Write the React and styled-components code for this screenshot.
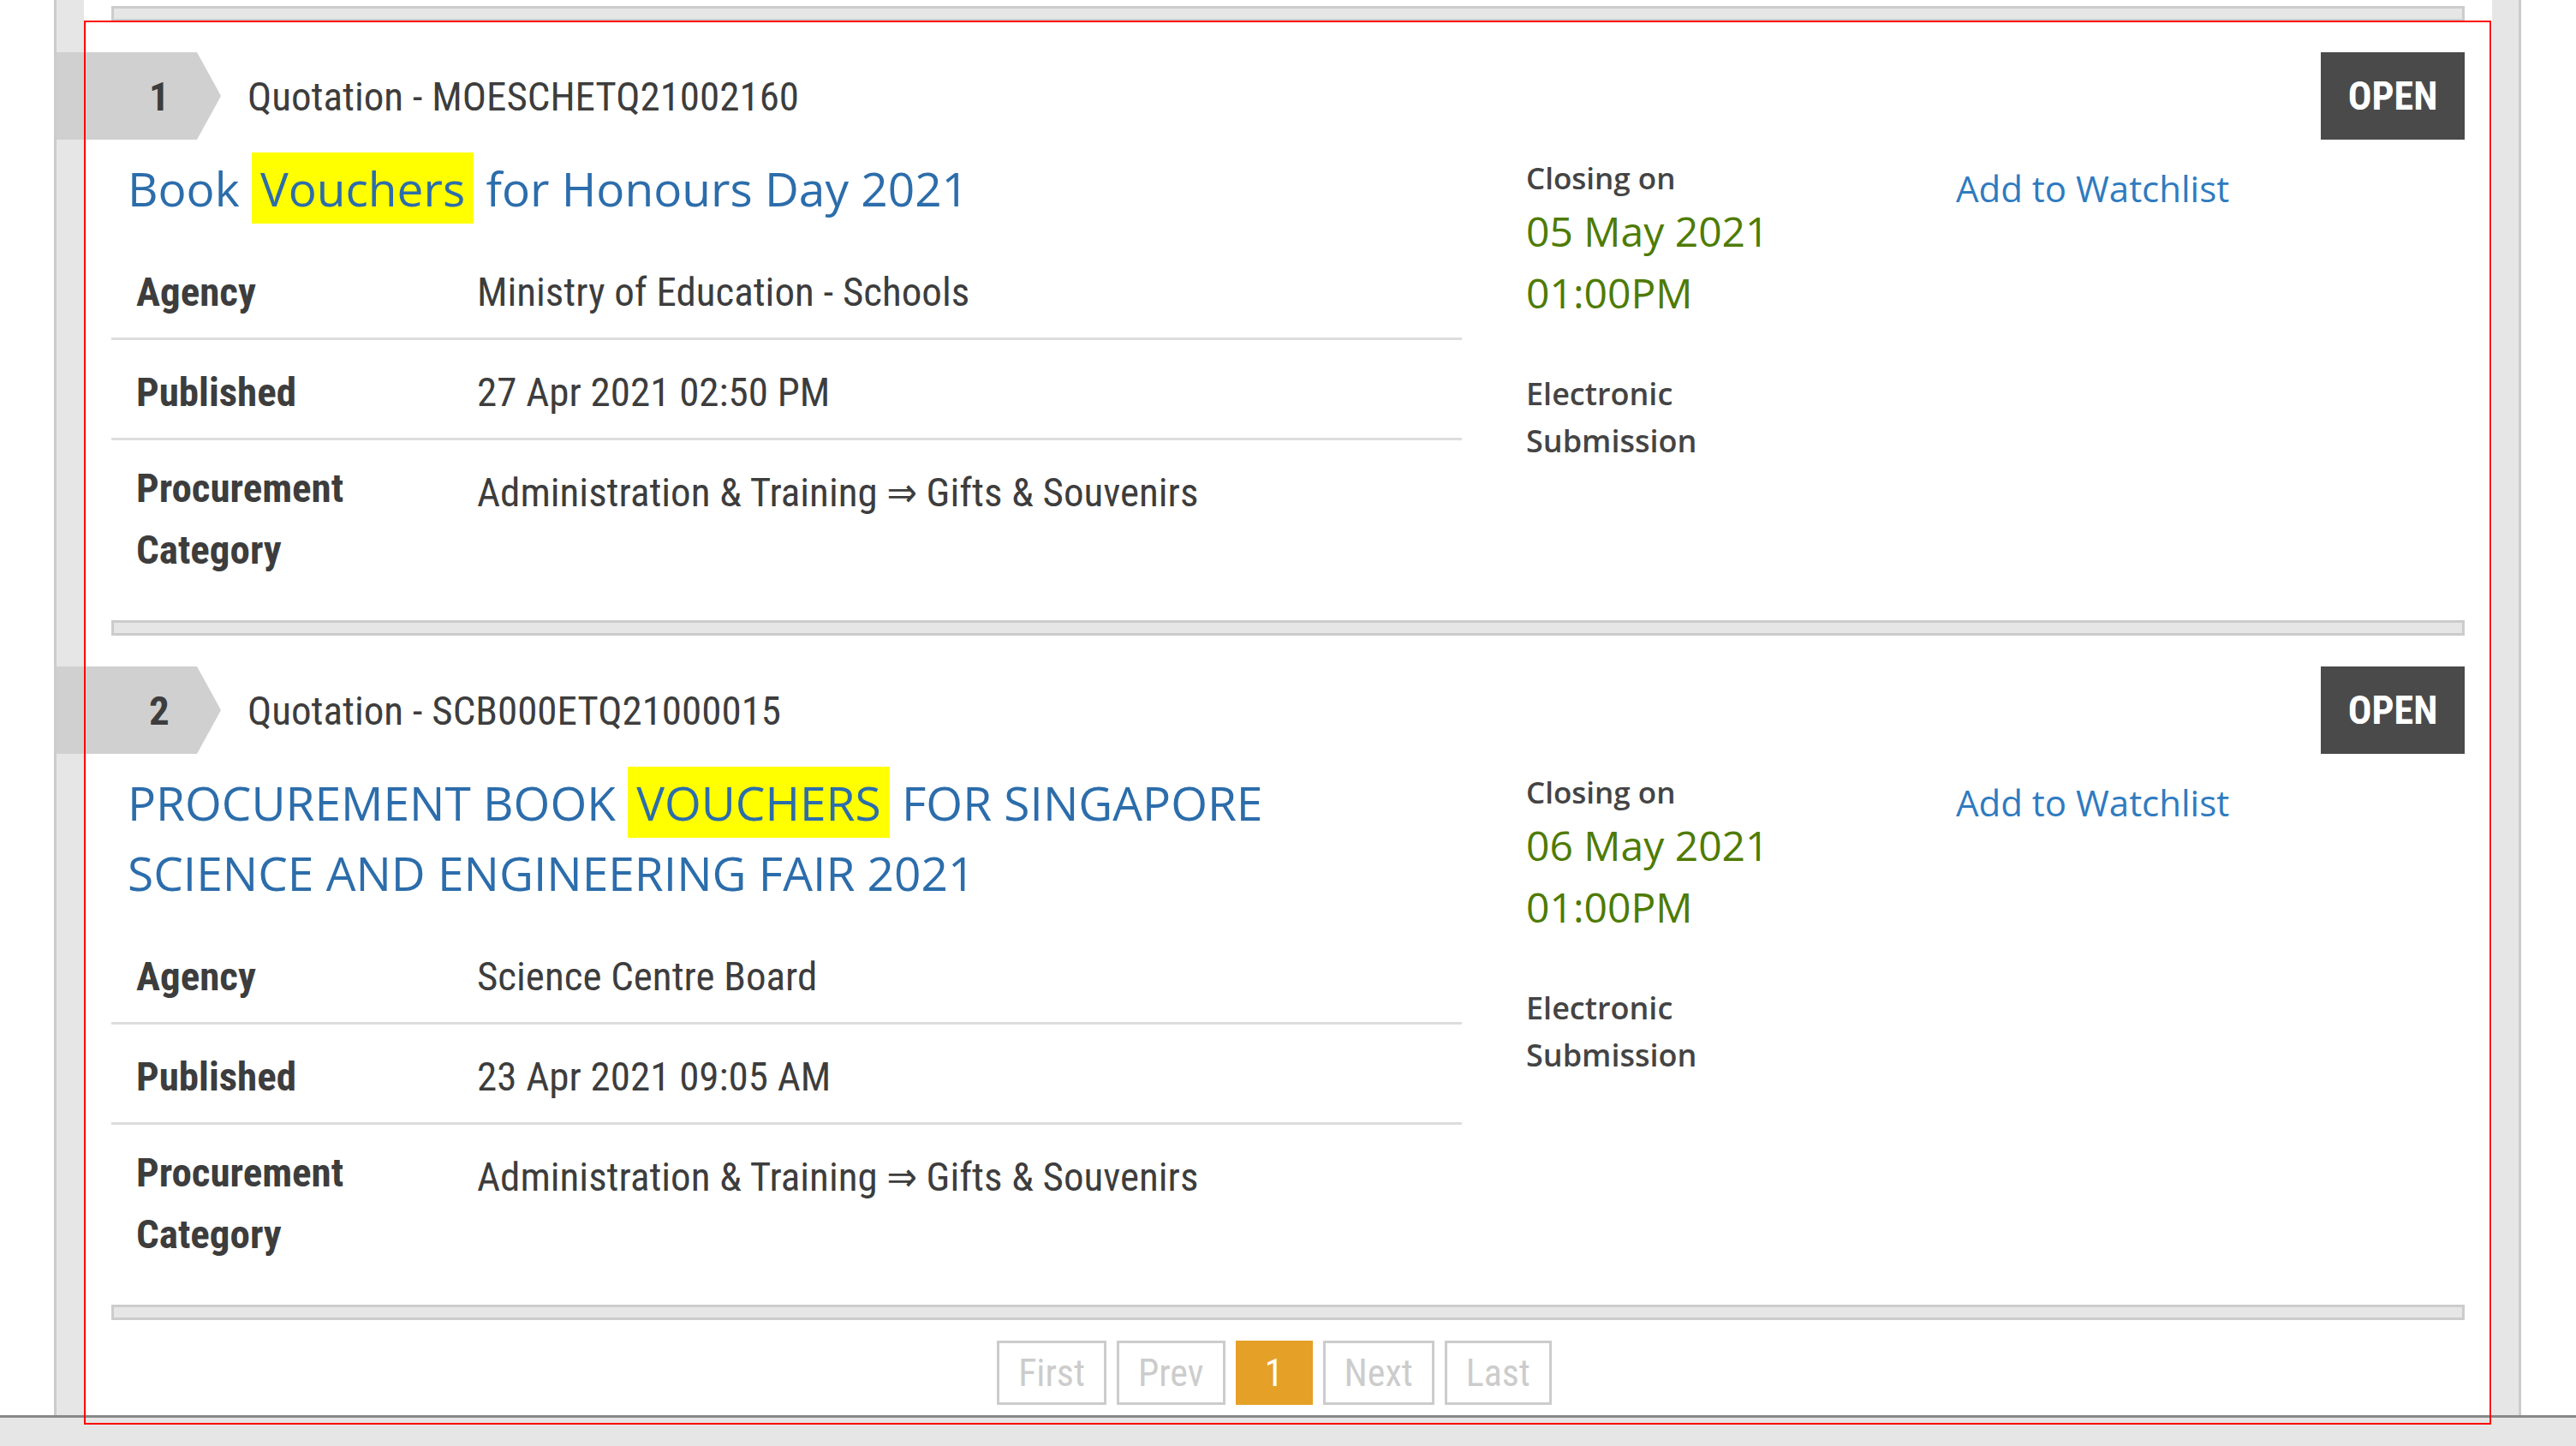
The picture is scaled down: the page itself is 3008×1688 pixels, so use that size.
import styled, { createGlobalStyle } from 'styled-components'

const narrow = `"Roboto Condensed", "Liberation Sans Narrow", "DejaVu Sans Condensed", "Arial Narrow", sans-serif`
const open = `"Open Sans", "Noto Sans", sans-serif`

const GlobalStyle = createGlobalStyle`
  html, body {
    margin: 0;
    padding: 0;
    background: #fff;
    overflow: hidden;
  }
  * { box-sizing: border-box; }
`

const Page = styled.div`
  position: relative;
  height: 100vh;
  display: flex;
  flex-direction: column;
  font-family: ${narrow};
  color: #444;
`

const Frame = styled.div`
  flex: 1;
  min-height: 0;
  width: 2881px;
  margin-left: 63px;
  border-left: 3px solid #ccc;
  border-right: 3px solid #ccc;
  background: #e6e6e6;
  padding: 0 31px 0 32px;
  overflow: hidden;
`

const Panel = styled.div`
  height: 100%;
  background: #fff;
  padding: 7px 32px 0;
`

const Separator = styled.div`
  height: 18px;
  border: 3px solid #ccc;
  background: #e6e6e6;
`

const Card = styled.section`
  padding: 36px 0 24px;
`

const CardHead = styled.div`
  display: flex;
  align-items: center;
  justify-content: space-between;
  height: 102px;
`

const HeadLeft = styled.div`
  display: flex;
  align-items: center;
  gap: 31px;
`

const NumberTab = styled.div`
  width: 195px;
  height: 102px;
  margin-left: -67px;
  padding-left: 111px;
  display: flex;
  align-items: center;
  background: #d0d0d0;
  clip-path: polygon(0 0, 167px 0, 195px 50%, 167px 100%, 0 100%);
  font-size: 47px;
  font-weight: 700;
  color: #3d3d3d;
`

const RefNo = styled.div`
  font-size: 47px;
  color: #3d3d3d;
`

const StatusBadge = styled.div`
  width: 168px;
  height: 102px;
  display: flex;
  align-items: center;
  justify-content: center;
  background: #4a4a4a;
  color: #fff;
  font-size: 46px;
  font-weight: 700;
`

const CardBody = styled.div`
  display: flex;
  gap: 75px;
`

const MainCol = styled.div`
  width: 1577px;
  flex: none;
`

const Title = styled.h2`
  margin: 16px 0 0;
  padding: 0 80px 0 19px;
  font-family: ${open};
  font-weight: 400;
  font-size: 55px;
  line-height: 82px;
  color: #2c6dab;
`

const Mark = styled.mark`
  background: #ffff00;
  color: inherit;
  padding: 4px 10px;
`

const InfoTable = styled.div`
  margin-top: 19px;
`

const InfoRow = styled.div`
  display: flex;
  padding: 25px 0 17px;
  border-bottom: ${p => (p.$last ? 'none' : '3px solid #ddd')};
  font-size: 47px;
  line-height: 72px;
`

const Label = styled.div`
  width: 427px;
  flex: none;
  margin: ${p => (p.$multi ? '-5px 0 5px' : '0')};
  padding-left: 29px;
  font-weight: 700;
  color: #3d3d3d;
`

const Value = styled.div`
  color: #3d3d3d;
`

const SideCol = styled.div`
  flex: 1;
  display: flex;
  font-family: ${open};
`

const Closing = styled.div`
  width: 502px;
  flex: none;
`

const SmallLabel = styled.div`
  margin-top: 19px;
  font-size: 35px;
  line-height: 52px;
  font-weight: 600;
  color: #444;
`

const Submission = styled.div`
  margin-top: 54px;
  font-size: 36px;
  line-height: 55px;
  font-weight: 600;
  color: #444;
`

const DateText = styled.div`
  font-size: 48px;
  line-height: 72px;
  color: #4e7b02;
`

const WatchLink = styled.a`
  display: block;
  margin-top: 27px;
  font-size: 42px;
  line-height: 60px;
  color: #2f7bbf;
  text-decoration: none;
`

const Pager = styled.div`
  display: flex;
  justify-content: center;
  gap: 12px;
  margin-top: 24px;
  padding-right: 32px;
`

const PageBtn = styled.span`
  height: 75px;
  min-width: ${p => (p.$active ? 90 : 0)}px;
  padding: 0 22px;
  display: flex;
  align-items: center;
  justify-content: center;
  border: 3px solid ${p => (p.$active ? '#e5a027' : '#ccc')};
  background: ${p => (p.$active ? '#e5a027' : '#fff')};
  color: ${p => (p.$active ? '#fff' : '#ccc')};
  font-size: 44px;
`

const Footer = styled.div`
  height: 36px;
  flex: none;
  border-top: 3px solid #888;
  background: #e6e6e6;
`

const RedMark = styled.div`
  position: absolute;
  left: 98px;
  top: 24px;
  width: 2811px;
  height: 1639px;
  border: 2px solid #ff0000;
  pointer-events: none;
`

const tenders = [
  {
    no: 1,
    ref: 'Quotation - MOESCHETQ21002160',
    title: ['Book ', 'Vouchers', ' for Honours Day 2021'],
    agency: 'Ministry of Education - Schools',
    published: '27 Apr 2021 02:50 PM',
    closeDate: '05 May 2021',
    closeTime: '01:00PM',
  },
  {
    no: 2,
    ref: 'Quotation - SCB000ETQ21000015',
    title: ['PROCUREMENT BOOK ', 'VOUCHERS', ' FOR SINGAPORE SCIENCE AND ENGINEERING FAIR 2021'],
    agency: 'Science Centre Board',
    published: '23 Apr 2021 09:05 AM',
    closeDate: '06 May 2021',
    closeTime: '01:00PM',
  },
]

function TenderCard({ t }) {
  return (
    <Card>
      <CardHead>
        <HeadLeft>
          <NumberTab>{t.no}</NumberTab>
          <RefNo>{t.ref}</RefNo>
        </HeadLeft>
        <StatusBadge>OPEN</StatusBadge>
      </CardHead>
      <CardBody>
        <MainCol>
          <Title>
            {t.title[0]}
            <Mark>{t.title[1]}</Mark>
            {t.title[2]}
          </Title>
          <InfoTable>
            <InfoRow>
              <Label>Agency</Label>
              <Value>{t.agency}</Value>
            </InfoRow>
            <InfoRow>
              <Label>Published</Label>
              <Value>{t.published}</Value>
            </InfoRow>
            <InfoRow $last>
              <Label $multi>Procurement<br />Category</Label>
              <Value>Administration &amp; Training ⇒ Gifts &amp; Souvenirs</Value>
            </InfoRow>
          </InfoTable>
        </MainCol>
        <SideCol>
          <Closing>
            <SmallLabel>Closing on</SmallLabel>
            <DateText>{t.closeDate}</DateText>
            <DateText>{t.closeTime}</DateText>
            <Submission>Electronic<br />Submission</Submission>
          </Closing>
          <WatchLink href="#">Add to Watchlist</WatchLink>
        </SideCol>
      </CardBody>
    </Card>
  )
}

export default function App() {
  return (
    <Page>
      <GlobalStyle />
      <Frame>
        <Panel>
          <Separator />
          {tenders.map(t => (
            <div key={t.no}>
              <TenderCard t={t} />
              <Separator />
            </div>
          ))}
          <Pager>
            <PageBtn>First</PageBtn>
            <PageBtn>Prev</PageBtn>
            <PageBtn $active>1</PageBtn>
            <PageBtn>Next</PageBtn>
            <PageBtn>Last</PageBtn>
          </Pager>
        </Panel>
      </Frame>
      <Footer />
      <RedMark />
    </Page>
  )
}
